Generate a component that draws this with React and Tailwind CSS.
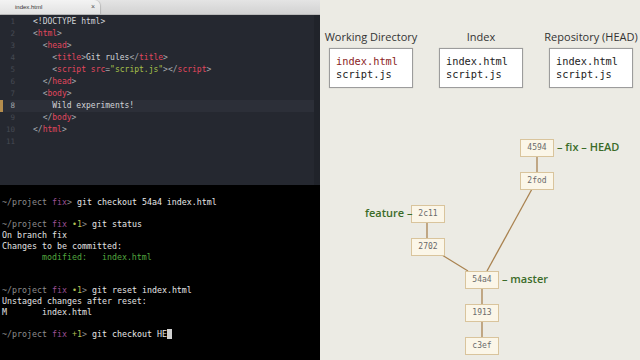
import React from 'react';

const mono = "font-['DejaVu_Sans_Mono',monospace]";
const sans = "font-['Open_Sans',sans-serif]";

// editor colours
const br = 'text-[#a4a8ae]';
const tag = 'text-[#e2475e]';
const str = 'text-[#a6c24a]';

function Tag({ name, close }) {
  return (
    <>
      <span className={br}>{close ? '</' : '<'}</span>
      <span className={tag}>{name}</span>
      <span className={br}>&gt;</span>
    </>
  );
}

const codeLines = [
  <span className="text-[#d3d5d8]">{'<!DOCTYPE html>'}</span>,
  <Tag name="html" />,
  <>{'  '}<Tag name="head" /></>,
  <>{'    '}<Tag name="title" />Git rules<Tag name="title" close /></>,
  <>
    {'    '}<span className={br}>&lt;</span><span className={tag}>script</span>{' '}
    <span className={tag}>src</span><span className={br}>=</span>
    <span className={str}>"script.js"</span><span className={br}>&gt;</span>
    <Tag name="script" close />
  </>,
  <>{'  '}<Tag name="head" close /></>,
  <>{'  '}<Tag name="body" /></>,
  <>{'    '}Wild experiments!</>,
  <>{'  '}<Tag name="body" close /></>,
  <Tag name="html" close />,
  <></>,
];

function Editor() {
  return (
    <div className="flex flex-col h-[185px]">
      <div className="h-[15px] flex bg-gradient-to-b from-[#e4e4e4] to-[#d2d2d2] border-b border-[#b9b9b9]">
        <div className="w-[100px] flex items-center justify-between pl-[15px] pr-[5px] bg-gradient-to-b from-[#f3f3f3] to-[#e2e2e2] rounded-tr-[6px] shadow-[1px_0_1px_rgba(0,0,0,0.15)]">
          <span className="font-['Liberation_Sans',sans-serif] text-[6px] text-[#333]">index.html</span>
          <span className="font-['Liberation_Sans',sans-serif] text-[7px] text-[#555]">×</span>
        </div>
      </div>
      <div className="flex-1 flex bg-[#252830] overflow-hidden">
        <div className={`flex-1 pt-[1px] ${mono} text-[8px] leading-[12px] text-[#d3d5d8]`}>
          {codeLines.map((l, i) => (
            <div key={i} className={`flex h-[12px] ${i === 7 ? 'bg-[#2c2f38]' : ''}`}>
              <div className={`w-[3px] ${i === 7 ? 'bg-[#b58d4d]' : ''}`} />
              <div className={`w-[12px] text-right text-[7.5px] ${i === 7 ? 'text-[#a0a4aa]' : 'text-[#454a53]'}`}>{i + 1}</div>
              <div className="pl-[18px] whitespace-pre">{l}</div>
            </div>
          ))}
        </div>
        <div className="w-[6px] bg-[#20232a]" />
      </div>
    </div>
  );
}

function Prompt({ mark, children }) {
  return (
    <>
      <span className="text-[#8c8c8c]">~/project </span>
      <span className="text-[#9a4f94]">fix</span>
      {mark && <span className="text-[#b4bf52]"> {mark}</span>}
      <span className="text-[#8c8c8c]">&gt; </span>
      <span className="text-[#e6e6e6]">{children}</span>
    </>
  );
}

function Terminal() {
  const rows = [
    <Prompt>git checkout 54a4 index.html</Prompt>,
    '',
    <Prompt mark="•1">git status</Prompt>,
    'On branch fix',
    'Changes to be committed:',
    <span className="text-[#52a63f]">{'        modified:   index.html'}</span>,
    '',
    '',
    <Prompt mark="•1">git reset index.html</Prompt>,
    'Unstaged changes after reset:',
    'M       index.html',
    '',
    <>
      <Prompt mark="+1">git checkout HE</Prompt>
      <span className="inline-block w-[5px] h-[10px] bg-[#d0d0d0] align-[-2px]" />
    </>,
  ];
  return (
    <div className={`flex-1 bg-black pt-[12px] pl-[2px] ${mono} text-[8.3px] leading-[11px] text-[#e2e2e2]`}>
      {rows.map((r, i) => (
        <div key={i} className="h-[11px] whitespace-pre">{r}</div>
      ))}
    </div>
  );
}

function FileBox({ label, first }) {
  return (
    <div className="w-[84px] flex flex-col items-center">
      <div className={`${sans} text-[11px] leading-[14px] text-[#333] whitespace-nowrap mb-[4px]`}>{label}</div>
      <div className={`w-full h-[40px] bg-white border border-[#9c9c9c] shadow-[0_0_1px_rgba(0,0,0,0.2)] pt-[6px] pl-[6px] ${mono} text-[10.3px] leading-[13.4px] text-[#222]`}>
        <div className={first}>index.html</div>
        <div>script.js</div>
      </div>
    </div>
  );
}

const nodes = [
  ['4594', 200, 139],
  ['2fod', 200, 172],
  ['2c11', 91, 205],
  ['2702', 91, 238],
  ['54a4', 145, 271],
  ['1913', 145, 304],
  ['c3ef', 145, 337],
];

function Graph() {
  return (
    <div className="absolute inset-0">
      <svg className="absolute inset-0" width="320" height="360">
        <g stroke="#a9824f" strokeWidth="1.3" fill="none">
          <line x1="217" y1="157" x2="217" y2="172" />
          <line x1="212" y1="189" x2="167" y2="271" />
          <line x1="107" y1="223" x2="107" y2="238" />
          <line x1="122" y1="255" x2="148" y2="271" />
          <line x1="162" y1="289" x2="162" y2="304" />
          <line x1="162" y1="322" x2="162" y2="337" />
        </g>
      </svg>
      {nodes.map(([id, x, y]) => (
        <div
          key={id}
          className={`absolute w-[34px] h-[18px] flex items-center justify-center bg-[#fbf6e8] border border-[#d9c49c] ${mono} text-[8px] text-[#6a6a6a]`}
          style={{ left: x, top: y }}
        >
          {id}
        </div>
      ))}
      <div className={`absolute left-[237px] top-[139px] h-[16px] flex items-center ${sans} font-semibold text-[11px] text-[#3b6b29] whitespace-nowrap`}>– fix – HEAD</div>
      <div className={`absolute left-[45px] top-[205px] h-[16px] flex items-center ${sans} font-semibold text-[11px] text-[#3b6b29] whitespace-nowrap`}>feature –</div>
      <div className={`absolute left-[182px] top-[271px] h-[16px] flex items-center ${sans} font-semibold text-[11px] text-[#3b6b29] whitespace-nowrap`}>– master</div>
    </div>
  );
}

export default function App() {
  return (
    <div className="w-[640px] h-[360px] flex overflow-hidden">
      <div className="w-[320px] flex flex-col">
        <Editor />
        <Terminal />
      </div>
      <div className="relative flex-1 bg-[#ecebe4]">
        <div className="relative z-10 flex gap-[26px] pl-[9px] pt-[30px]">
          <FileBox label="Working Directory" first="text-[#8a2323]" />
          <FileBox label="Index" />
          <FileBox label="Repository (HEAD)" />
        </div>
        <Graph />
      </div>
    </div>
  );
}
